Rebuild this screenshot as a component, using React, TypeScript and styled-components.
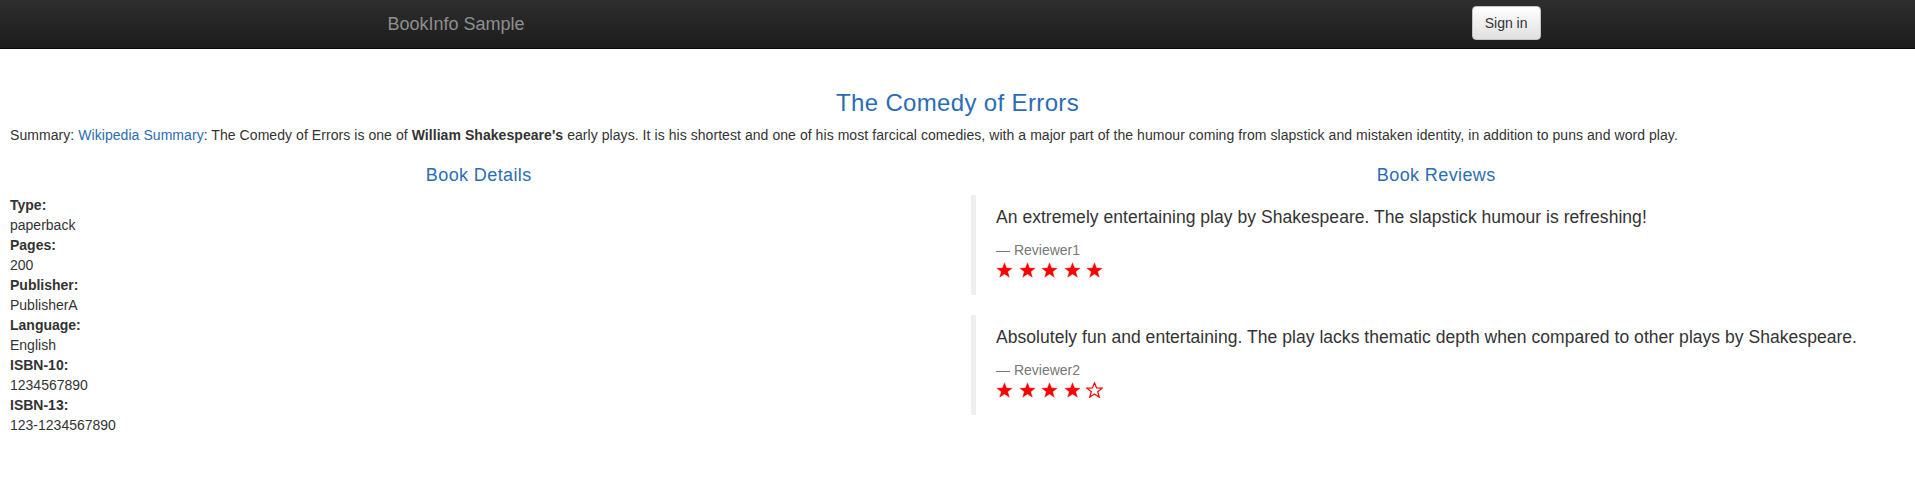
import styled, { createGlobalStyle } from 'styled-components';

type Review = {
  text: string;
  reviewer: string;
  rating: number;
};

const details: [string, string][] = [
  ['Type:', 'paperback'],
  ['Pages:', '200'],
  ['Publisher:', 'PublisherA'],
  ['Language:', 'English'],
  ['ISBN-10:', '1234567890'],
  ['ISBN-13:', '123-1234567890'],
];

const reviews: Review[] = [
  {
    text: 'An extremely entertaining play by Shakespeare. The slapstick humour is refreshing!',
    reviewer: 'Reviewer1',
    rating: 5,
  },
  {
    text: 'Absolutely fun and entertaining. The play lacks thematic depth when compared to other plays by Shakespeare.',
    reviewer: 'Reviewer2',
    rating: 4,
  },
];

function Star({ filled }: { filled: boolean }) {
  return (
    <svg width="17" height="16" viewBox="0 0 24 23">
      <polygon
        points="12,1 14.9,8.6 23,8.9 16.6,13.9 18.9,21.8 12,17.3 5.1,21.8 7.4,13.9 1,8.9 9.1,8.6"
        fill={filled ? '#ff0000' : 'none'}
        stroke="#ff0000"
        strokeWidth={filled ? 0.5 : 1.8}
        strokeLinejoin="miter"
      />
    </svg>
  );
}

export default function App() {
  return (
    <>
      <GlobalStyle />
      <Navbar>
        <NavInner>
          <Brand>BookInfo Sample</Brand>
          <SignIn type="button">Sign in</SignIn>
        </NavInner>
      </Navbar>
      <Main>
        <Intro>
          <Title>The Comedy of Errors</Title>
          <Summary>
            Summary: <a href="#">Wikipedia Summary</a>: The Comedy of Errors is one of <b>William Shakespeare's</b>{' '}
            early plays. It is his shortest and one of his most farcical comedies, with a major part of the humour coming
            from slapstick and mistaken identity, in addition to puns and word play.
          </Summary>
        </Intro>
        <Columns>
          <Column $inset={10}>
            <SectionTitle>Book Details</SectionTitle>
            <DetailList>
              {details.map(([label, value]) => (
                <div key={label}>
                  <dt>{label}</dt>
                  <dd>{value}</dd>
                </div>
              ))}
            </DetailList>
          </Column>
          <Column $inset={13.5}>
            <SectionTitle>Book Reviews</SectionTitle>
            {reviews.map(r => (
              <Quote key={r.reviewer}>
                <p>{r.text}</p>
                <Footer>— {r.reviewer}</Footer>
                <Stars>
                  {[0, 1, 2, 3, 4].map(i => (
                    <Star key={i} filled={i < r.rating} />
                  ))}
                </Stars>
              </Quote>
            ))}
          </Column>
        </Columns>
      </Main>
    </>
  );
}

const GlobalStyle = createGlobalStyle`
  body {
    margin: 0;
    font-family: "Liberation Sans", Helvetica, Arial, sans-serif;
    font-size: 14px;
    line-height: 20px;
    color: #333;
    background: #fff;
  }
`;

const Navbar = styled.nav`
  height: 48px;
  border-bottom: 1px solid #080808;
  background: linear-gradient(to bottom, #2e2e2e 0, #1c1c1c 100%);
`;

const NavInner = styled.div`
  width: 1170px;
  margin: 0 auto;
  display: flex;
  justify-content: space-between;
  align-items: flex-start;
`;

const Brand = styled.a`
  padding: 14px 15px;
  font-size: 18px;
  line-height: 20px;
  color: #8f8f8f;
`;

const SignIn = styled.button`
  margin: 6px 2px 0 0;
  height: 34px;
  padding: 0 12px;
  font-family: inherit;
  font-size: 14px;
  color: #333;
  border: 1px solid #c4c4c4;
  border-radius: 4px;
  background: linear-gradient(to bottom, #ffffff 0, #e0e0e0 100%);
  box-shadow: inset 0 1px 0 rgba(255, 255, 255, 0.15);
`;

const Main = styled.main`
  display: flex;
  flex-direction: column;
`;

const Intro = styled.div`
  padding: 0 10px;
`;

const Title = styled.h3`
  margin: 41px 0 8.5px;
  font-size: 24px;
  font-weight: 500;
  line-height: 26.4px;
  letter-spacing: 0.35px;
  text-align: center;
  color: #2a6db5;
`;

const Summary = styled.p`
  margin: 0 0 21px;
  letter-spacing: 0.06px;

  a {
    color: #2a6db5;
    text-decoration: none;
  }
`;

const Columns = styled.div`
  display: grid;
  grid-template-columns: 1fr 1fr;
`;

const Column = styled.section<{ $inset: number }>`
  min-width: 0;
  padding: 0 ${p => p.$inset}px;
`;

const SectionTitle = styled.h4`
  margin: 0 0 9px;
  font-size: 18px;
  font-weight: 500;
  line-height: 19.8px;
  letter-spacing: 0.4px;
  text-align: center;
  color: #2a6db5;
`;

const DetailList = styled.dl`
  margin: 0;

  dt {
    font-weight: 700;
  }
  dd {
    margin: 0;
  }
`;

const Quote = styled.blockquote`
  margin: 0 0 20px;
  padding: 10px 20px 17px;
  border-left: 5px solid #eee;

  p {
    margin: 0 0 10px;
    font-size: 17.5px;
    line-height: 25px;
    letter-spacing: 0.04px;
  }
`;

const Footer = styled.footer`
  font-size: 14px;
  line-height: 20px;
  color: #777;
`;

const Stars = styled.div`
  display: flex;
  gap: 5.5px;
  height: 16px;
  margin-top: 2px;
`;
